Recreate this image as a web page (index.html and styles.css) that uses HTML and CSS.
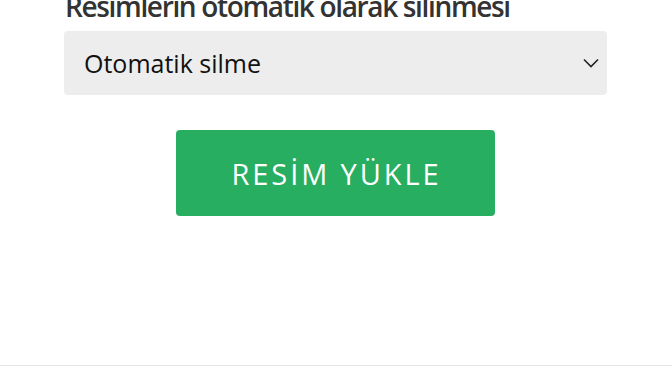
FILE: index.html
```html
<!doctype html>
<html lang="tr">
<head>
<meta charset="utf-8">
<title>Resim Yükle</title>
<link rel="stylesheet" href="styles.css">
</head>
<body>
	<div class="upload-wrapper">
		<label class="field-label" for="autoDelete">Resimlerin otomatik olarak silinmesi</label>
		<div class="select-box">
			<select id="autoDelete" name="autoDelete">
				<option>Otomatik silme</option>
			</select>
			<svg class="chevron" width="16" height="10" viewBox="0 0 16 10">
				<path d="M1 1.5 L8 8.5 L15 1.5" fill="none" stroke="#222" stroke-width="1.6"/>
			</svg>
		</div>
		<div class="btn-row">
			<button class="upload-btn" type="button">RESİM YÜKLE</button>
		</div>
	</div>
	<div class="footer-line"></div>
</body>
</html>
```

FILE: styles.css
```css
/*Page*/
body {
	margin: 0;
	background: #fff;
	font-family: "Open Sans", "Noto Sans", sans-serif;
	overflow: hidden;
}

.upload-wrapper {
	padding: 0 65px 0 64px;
}

/*Label*/
.field-label {
	display: block;
	margin-top: -10px;
	margin-left: 1px;
	font-size: 28px;
	line-height: 32px;
	font-weight: 600;
	color: #333;
	letter-spacing: -1.35px;
	white-space: nowrap;
}

/*Select*/
.select-box {
	position: relative;
	margin-top: 9px;
	height: 64px;
	background: #ededed;
	border-radius: 4px;
}

.select-box select {
	appearance: none;
	-webkit-appearance: none;
	width: 100%;
	height: 64px;
	border: 0;
	background: transparent;
	padding: 0 0 0 20px;
	font-family: "Open Sans", "Noto Sans", sans-serif;
	font-size: 25px;
	color: #111;
	outline: none;
}

.chevron {
	position: absolute;
	right: 8px;
	top: 27px;
	pointer-events: none;
}

/*Button*/
.btn-row {
	display: flex;
	justify-content: center;
	margin-top: 35px;
}

.upload-btn {
	width: 319px;
	height: 86px;
	border: 0;
	border-radius: 4px;
	background: #27ae60;
	color: #fff;
	font-family: "Open Sans", "Noto Sans", sans-serif;
	font-size: 29px;
	letter-spacing: 2.9px;
	padding: 0 0 0 2px;
}

/*Footer*/
.footer-line {
	margin-top: 149px;
	border-top: 1px solid #e6e6e6;
}
```
